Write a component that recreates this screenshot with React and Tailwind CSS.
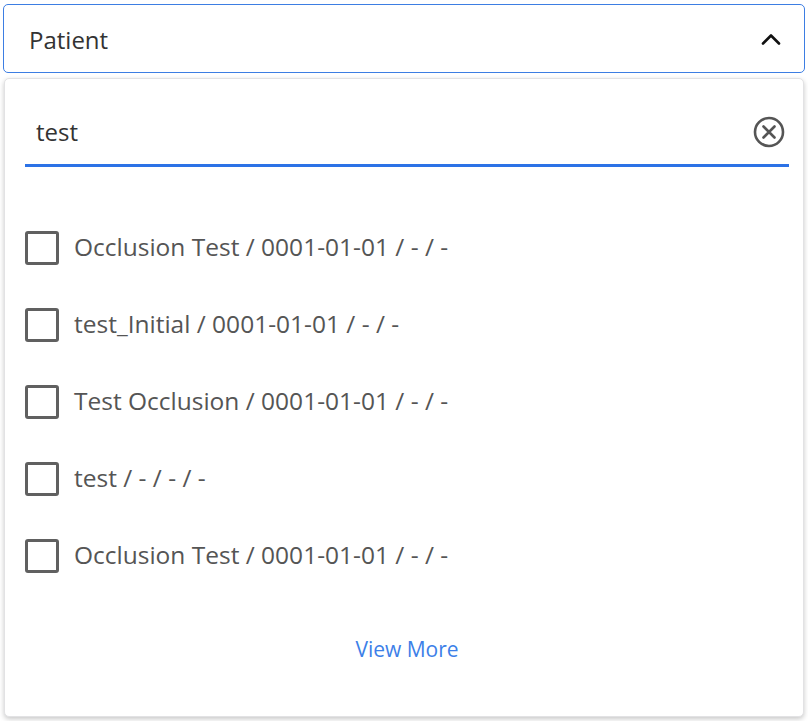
import { useState } from 'react';

const patients = [
  'Occlusion Test / 0001-01-01 / - / -',
  'test_Initial / 0001-01-01 / - / -',
  'Test Occlusion / 0001-01-01 / - / -',
  'test / - / - / -',
  'Occlusion Test / 0001-01-01 / - / -',
];

const ChevronUp = () => (
  <svg width="20" height="12" viewBox="0 0 20 12" fill="none">
    <path d="M2 10.5 L10 2.5 L18 10.5" stroke="#111" strokeWidth="2.6" strokeLinecap="round" strokeLinejoin="round" />
  </svg>
);

const ClearIcon = () => (
  <svg width="32" height="32" viewBox="0 0 32 32" fill="none">
    <circle cx="16" cy="16" r="14" stroke="#555" strokeWidth="2.6" />
    <path d="M10.5 10.5 L21.5 21.5 M21.5 10.5 L10.5 21.5" stroke="#555" strokeWidth="2.6" strokeLinecap="round" />
  </svg>
);

export default function App() {
  const [query, setQuery] = useState('test');
  const [checked, setChecked] = useState([]);

  const toggle = (i) =>
    setChecked((c) => (c.includes(i) ? c.filter((x) => x !== i) : [...c, i]));

  return (
    <div className="w-[808px] h-[721px] bg-white px-[3px] pt-[4px] font-['Open_Sans',sans-serif] overflow-hidden">
      <button className="w-full h-[69px] border border-[#3d7ee3] rounded-[5px] flex items-center justify-between pl-[25px] pr-[23px] bg-white">
        <span className="text-[24px] text-[#333] pt-[2px]">Patient</span>
        <ChevronUp />
      </button>

      <div className="mt-[5px] mx-[1px] h-[639px] rounded-[5px] border border-[#e2e2e4] bg-white shadow-[0_2px_5px_rgba(0,0,0,0.22)] pl-[20px] pr-[14px] flex flex-col">
        <div className="mt-[20px] h-[68px] flex items-center border-b-[3px] border-[#2c72e6] pl-[11px] pr-[4px]">
          <input
            value={query}
            onChange={(e) => setQuery(e.target.value)}
            className="flex-1 outline-none text-[24px] text-[#333] bg-transparent caret-black"
          />
          <button onClick={() => setQuery('')} className="flex items-center">
            <ClearIcon />
          </button>
        </div>

        <div className="mt-[42px] flex flex-col">
          {patients.map((p, i) => (
            <label key={i} className="h-[77px] flex items-center gap-[15px] cursor-pointer">
              <span
                onClick={() => toggle(i)}
                className={`w-[34px] h-[34px] rounded-[3px] border-[3px] border-[#606060] shrink-0 ${checked.includes(i) ? 'bg-[#2c72e6]' : 'bg-white'}`}
              ></span>
              <span className="text-[24.5px] text-[#555]">{p}</span>
            </label>
          ))}
        </div>

        <div className="mt-[40px] flex justify-center">
          <button className="text-[21px] text-[#3d7fe8]">View More</button>
        </div>
      </div>
    </div>
  );
}
